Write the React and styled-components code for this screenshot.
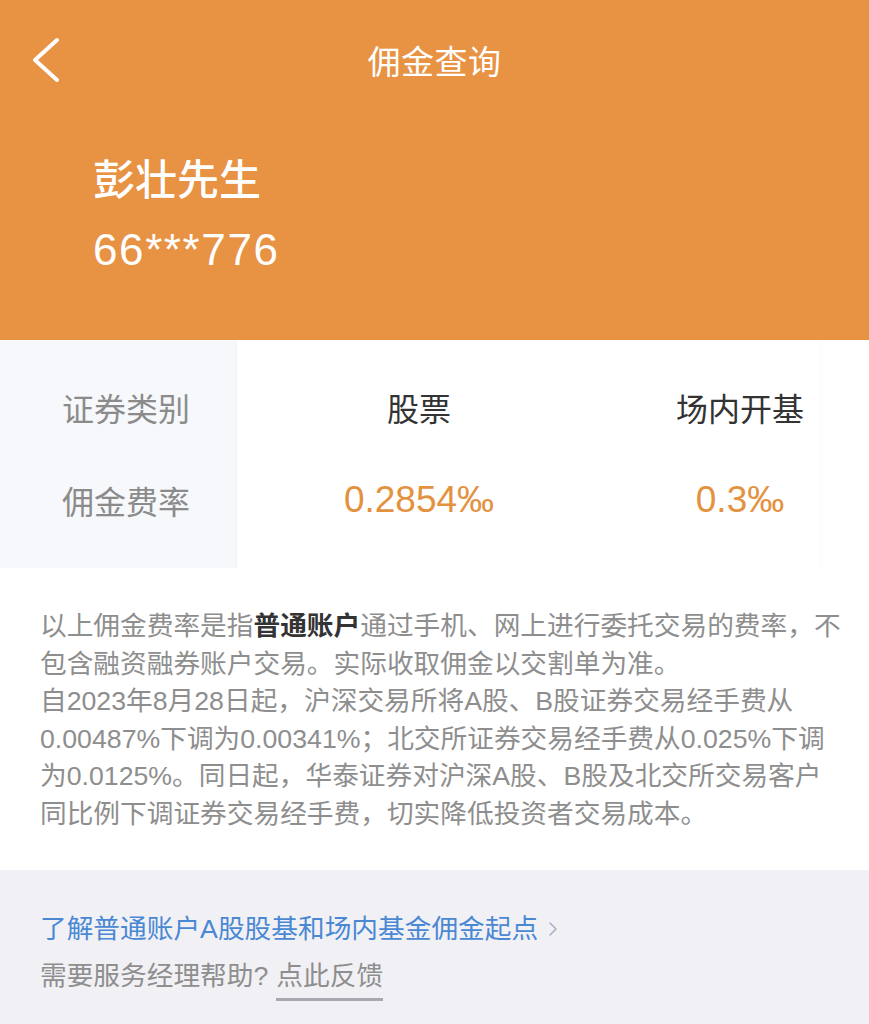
import styled, { createGlobalStyle } from 'styled-components'

const GlobalStyle = createGlobalStyle`
  html, body {
    margin: 0;
    padding: 0;
    background: #ffffff;
  }
  body {
    font-family: "Liberation Sans", "Noto Sans CJK SC", sans-serif;
    -webkit-font-smoothing: antialiased;
  }
`

const Page = styled.div`
  width: 869px;
  min-height: 1024px;
  display: flex;
  flex-direction: column;
  background: #ffffff;
  overflow: hidden;
`

const Header = styled.header`
  height: 340px;
  background: #e89244;
  color: #ffffff;
  display: flex;
  flex-direction: column;
`

const NavBar = styled.div`
  height: 120px;
  display: grid;
  grid-template-columns: 120px 1fr 120px;
  align-items: center;
`

const BackButton = styled.button`
  border: 0;
  background: transparent;
  padding: 0 0 0 30px;
  display: flex;
  align-items: center;
  cursor: pointer;
`

const Title = styled.h1`
  margin: 0;
  text-align: center;
  font-size: 33px;
  font-weight: 400;
  letter-spacing: 0.5px;
`

const Account = styled.div`
  padding: 34px 0 0 93px;
  display: flex;
  flex-direction: column;
  gap: 14px;
`

const Name = styled.div`
  font-size: 42px;
  font-weight: 500;
  line-height: 54px;
`

const AccountNo = styled.div`
  font-size: 44px;
  line-height: 56px;
  letter-spacing: 1.6px;
`

const Table = styled.section`
  display: flex;
  height: 228px;
  background: #ffffff;
`

const LabelCol = styled.div`
  width: 237px;
  background: #f7f8fb;
  padding: 20px 0 22px 62px;
  box-sizing: border-box;
  display: flex;
  flex-direction: column;
`

const RateCard = styled.div`
  width: 583px;
  background: #ffffff;
  box-shadow: 0 2px 6px rgba(0, 0, 0, 0.035);
  padding: 20px 0 22px;
  box-sizing: border-box;
  display: grid;
  grid-template-columns: 364px 278px;
  grid-auto-rows: 93px;
`

const Cell = styled.div`
  display: flex;
  align-items: center;
  justify-content: ${p => (p.$left ? 'flex-start' : 'center')};
  font-size: ${p => (p.$rate ? '37px' : '32px')};
  color: ${p => (p.$rate ? '#e3923f' : p.$label ? '#8b8b8b' : '#333333')};
  height: 93px;
`

const Notice = styled.section`
  padding: 40px 40px 34px;
  font-size: 26.7px;
  line-height: 37.5px;
  color: #8e8e8e;
  background: #ffffff;
  height: 302px;
  box-sizing: border-box;
`

const Line = styled.div`
  white-space: nowrap;
`

const Strong = styled.b`
  color: #333333;
  font-weight: 700;
`

const Footer = styled.footer`
  flex: 1;
  background: #f1f1f5;
  padding: 40px 40px 20px;
  display: flex;
  flex-direction: column;
  gap: 9px;
  font-size: 26.7px;
  line-height: 38px;
`

const Link = styled.a`
  color: #4a88d4;
  text-decoration: none;
  display: flex;
  align-items: center;
  gap: 10px;
`

const Help = styled.div`
  color: #8e8e8e;
`

const Feedback = styled.span`
  color: #8e8e8e;
  display: inline-block;
  margin-left: 8px;
  padding-bottom: 3px;
  border-bottom: 3px solid #a8a8b0;
`

const rates = [
  { name: '股票', rate: '0.2854‰' },
  { name: '场内开基', rate: '0.3‰' }
]

function App () {
  return (
    <Page>
      <GlobalStyle />
      <Header>
        <NavBar>
          <BackButton aria-label="返回">
            <svg width="32" height="48" viewBox="0 0 32 48">
              <path d="M27 4 L5 24 L27 44" fill="none" stroke="#ffffff" strokeWidth="4" strokeLinecap="round" strokeLinejoin="round" />
            </svg>
          </BackButton>
          <Title>佣金查询</Title>
          <span />
        </NavBar>
        <Account>
          <Name>彭壮先生</Name>
          <AccountNo>66***776</AccountNo>
        </Account>
      </Header>

      <Table>
        <LabelCol>
          <Cell $left $label>证券类别</Cell>
          <Cell $left $label>佣金费率</Cell>
        </LabelCol>
        <RateCard>
          {rates.map(r => <Cell key={r.name}>{r.name}</Cell>)}
          {rates.map(r => <Cell key={r.rate} $rate>{r.rate}</Cell>)}
        </RateCard>
      </Table>

      <Notice>
        <Line>以上佣金费率是指<Strong>普通账户</Strong>通过手机、网上进行委托交易的费率，不</Line>
        <Line>包含融资融券账户交易。实际收取佣金以交割单为准。</Line>
        <Line>自2023年8月28日起，沪深交易所将A股、B股证券交易经手费从</Line>
        <Line>0.00487%下调为0.00341%；北交所证券交易经手费从0.025%下调</Line>
        <Line>为0.0125%。同日起，华泰证券对沪深A股、B股及北交所交易客户</Line>
        <Line>同比例下调证券交易经手费，切实降低投资者交易成本。</Line>
      </Notice>

      <Footer>
        <Link href="#">
          了解普通账户A股股基和场内基金佣金起点
          <svg width="10" height="18" viewBox="0 0 10 18">
            <path d="M2 3 L8 9 L2 15" fill="none" stroke="#a9b3c4" strokeWidth="1.6" strokeLinecap="round" strokeLinejoin="round" />
          </svg>
        </Link>
        <Help>需要服务经理帮助?<Feedback>点此反馈</Feedback></Help>
      </Footer>
    </Page>
  )
}

export default App
